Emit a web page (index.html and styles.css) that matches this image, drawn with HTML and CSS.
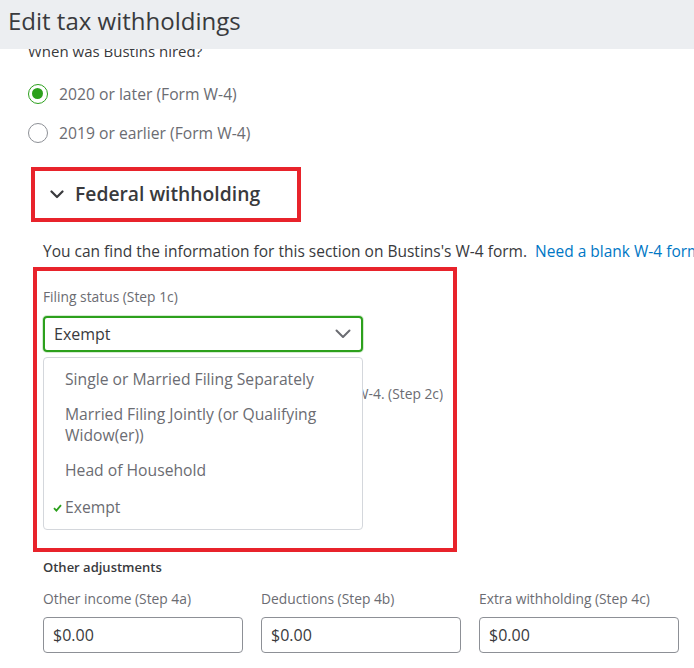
FILE: index.html
```html
<!DOCTYPE html>
<html>
<head>
<meta charset="utf-8">
<link rel="stylesheet" href="styles.css">
</head>
<body>
<header class="topbar"><h1 class="title">Edit tax withholdings</h1></header>
<main class="content">
  <p class="question">When was Bustins hired?</p>
  <div class="radios">
    <label class="radio-row"><span class="radio checked"></span><span class="radio-label">2020 or later (Form W-4)</span></label>
    <label class="radio-row"><span class="radio"></span><span class="radio-label">2019 or earlier (Form W-4)</span></label>
  </div>
  <div class="section-head hl">
    <svg class="chev" width="14" height="9" viewBox="0 0 14 9"><path d="M1.5 1.5 L7 7 L12.5 1.5" fill="none" stroke="#393a3d" stroke-width="2.2" stroke-linecap="round" stroke-linejoin="round"/></svg>
    <span class="section-title">Federal withholding</span>
  </div>
  <p class="info">You can find the information for this section on Bustins's W-4 form.&nbsp; <a class="link">Need a blank W-4 form?</a></p>
  <div class="filing hl">
    <div class="field-label">Filing status (Step 1c)</div>
    <div class="select-wrap">
      <div class="select">
        <span>Exempt</span>
        <svg width="16" height="10" viewBox="0 0 16 10"><path d="M1.5 1.5 L8 8 L14.5 1.5" fill="none" stroke="#6b6c72" stroke-width="2" stroke-linecap="round" stroke-linejoin="round"/></svg>
      </div>
      <ul class="menu">
        <li>Single or Married Filing Separately</li>
        <li>Married Filing Jointly (or Qualifying Widow(er))</li>
        <li>Head of Household</li>
        <li class="selected"><svg class="check" width="9" height="8" viewBox="0 0 9 8"><path d="M1 4.2 L3.4 6.6 L8 1.2" fill="none" stroke="#2ca01c" stroke-width="1.8"/></svg>Exempt</li>
      </ul>
      <div class="behind">
        <span class="cb-label">Multiple jobs or spouse works: check if the box is checked on Form W-4. (Step 2c)</span>
      </div>
    </div>
  </div>
  <div class="adjust-title">Other adjustments</div>
  <div class="adjust-grid">
    <div class="field"><div class="field-label">Other income (Step 4a)</div><div class="input">$0.00</div></div>
    <div class="field"><div class="field-label">Deductions (Step 4b)</div><div class="input">$0.00</div></div>
    <div class="field"><div class="field-label">Extra withholding (Step 4c)</div><div class="input">$0.00</div></div>
  </div>
</main>
</body>
</html>
```
FILE: styles.css
```css
html, body { margin: 0; padding: 0; background: #fff; }
body {
  font-family: "Open Sans", "Liberation Sans", sans-serif;
  color: #393a3d;
  width: 694px;
  height: 668px;
  overflow: hidden;
}
.topbar {
  position: relative;
  z-index: 2;
  height: 49px;
  background: #eceef1;
  display: flex;
  align-items: center;
  padding-left: 8px;
}
.title {
  margin: 0;
  font-size: 24px;
  font-weight: 400;
  color: #393a3d;
  position: relative;
  top: -4px;
}
.content { padding-left: 28px; position: relative; }
.question {
  margin: -8px 0 0;
  font-size: 15px;
  line-height: 20px;
  color: #393a3d;
}
.radios { margin-top: 23px; display: flex; flex-direction: column; gap: 19px; }
.radio-row { display: flex; align-items: center; gap: 11px; height: 20px; }
.radio {
  width: 20px; height: 20px; border-radius: 50%;
  border: 1.5px solid #8d9096; box-sizing: border-box;
  display: inline-block;
  position: relative;
}
.radio.checked { border-color: #2ca01c; }
.radio.checked::after {
  content: ""; position: absolute; left: 3px; top: 3px;
  width: 11px; height: 11px; border-radius: 50%; background: #2ca01c;
}
.radio-label { font-size: 15.7px; color: #6b6c72; }
.hl { border: 4px solid #e8232b; box-sizing: border-box; }
.section-head {
  margin: 24px 0 0 3px;
  width: 270px; height: 55px;
  display: flex; align-items: center;
  padding-left: 15px;
  gap: 11px;
}
.section-title { font-size: 19.3px; font-weight: 600; color: #393a3d; position: relative; top: -1px; }
.info {
  margin: 19px 0 0 15px;
  font-size: 15.5px;
  line-height: 20px;
  white-space: nowrap;
  color: #393a3d;
}
.link { color: #0077c5; }
.filing {
  margin: 6px 0 0 5px;
  width: 424px; height: 285px;
  padding: 17px 0 0 6px;
}
.field-label { font-size: 13.8px; color: #6b6c72; line-height: 18px; white-space: nowrap; }
.select-wrap { position: relative; margin-top: 10px; width: 320px; }
.select {
  height: 36px; box-sizing: border-box;
  border: 2px solid #2ca01c; border-radius: 4px;
  display: flex; align-items: center; justify-content: space-between;
  padding: 0 10px 0 9px;
  font-size: 16px; color: #393a3d;
  box-shadow: 0 0 0 1px #d4ebd1;
}
.menu {
  position: absolute; z-index: 3;
  left: 0; top: 41px; width: 320px; box-sizing: border-box;
  margin: 0; padding: 11px 0 1px; list-style: none;
  background: #fff;
  border: 1px solid #d4d7dc; border-radius: 4px;
  font-size: 15.7px; color: #6b6c72; line-height: 21px;
}
.menu li { padding: 0 20px 14px 21px; position: relative; }
.menu li.selected { padding-bottom: 10px; margin-top: 2px; }
.check { position: absolute; left: 9px; top: 7px; }
.behind {
  margin-top: 30px;
  width: 400px;
  overflow: hidden;
  white-space: nowrap;
  text-align: right;
  direction: rtl;
}
.cb-label { font-size: 13.8px; color: #6b6c72; direction: ltr; unicode-bidi: embed; }
.adjust-title { margin: 6px 0 0 15px; font-size: 13px; font-weight: 600; color: #393a3d; line-height: 18px; }
.adjust-grid {
  margin: 14px 0 0 15px;
  display: grid; grid-template-columns: repeat(3, 200px); column-gap: 18px;
}
.field .input {
  margin-top: 9px;
  height: 36px; box-sizing: border-box;
  border: 1px solid #8d9096; border-radius: 4px;
  display: flex; align-items: center; padding-left: 9px;
  font-size: 16px; color: #393a3d;
}
```
